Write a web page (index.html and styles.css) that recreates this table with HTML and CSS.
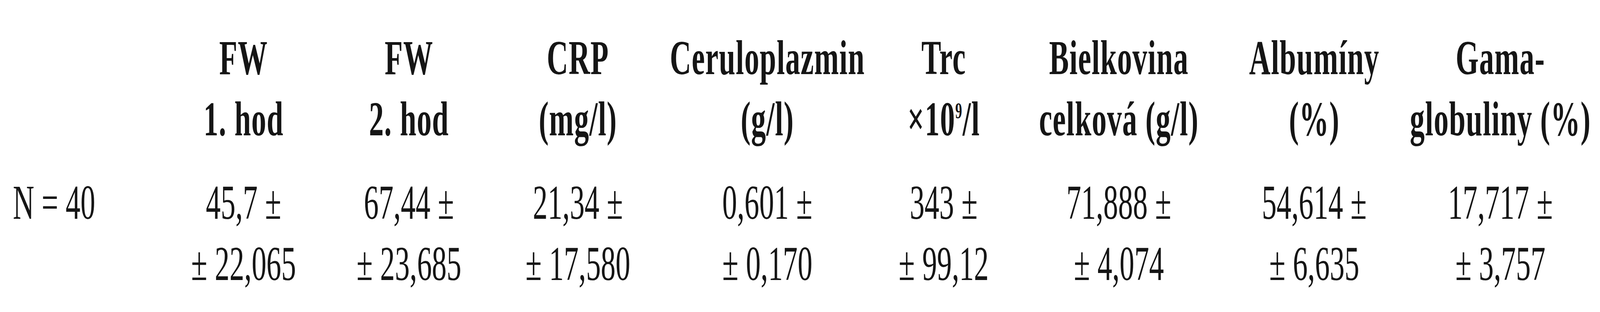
FILE: index.html
```html
<!DOCTYPE html>
<html lang="sk">
<head>
<meta charset="utf-8">
<title>Tabuľka</title>
<link rel="stylesheet" href="styles.css">
</head>
<body>
<div class="frame">
  <div class="table">
    <div class="hdr empty"></div>
    <div class="hdr">FW<br>1. hod</div>
    <div class="hdr">FW<br>2. hod</div>
    <div class="hdr">CRP<br>(mg/l)</div>
    <div class="hdr">Ceruloplazmin<br>(g/l)</div>
    <div class="hdr">Trc<br>×10<span class="sup">9</span>/l</div>
    <div class="hdr">Bielkovina<br>celková (g/l)</div>
    <div class="hdr">Albumíny<br>(%)</div>
    <div class="hdr">Gama-<br>globuliny (%)</div>

    <div class="label">N = 40</div>
    <div class="cell">45,7 ±<br>± 22,065</div>
    <div class="cell">67,44 ±<br>± 23,685</div>
    <div class="cell">21,34 ±<br>± 17,580</div>
    <div class="cell">0,601 ±<br>± 0,170</div>
    <div class="cell">343 ±<br>± 99,12</div>
    <div class="cell">71,888 ±<br>± 4,074</div>
    <div class="cell">54,614 ±<br>± 6,635</div>
    <div class="cell">17,717 ±<br>± 3,757</div>
  </div>
</div>
<script src="app.js"></script>
</body>
</html>
```
FILE: styles.css
```css
:root {
  --sx: 0.61006;
}
html, body {
  margin: 0;
  padding: 0;
  background: #ffffff;
  overflow: hidden;
}
body {
  font-family: "Liberation Serif", "Times New Roman", serif;
  color: #151515;
  font-size: 124px;
  line-height: 157px;
}
.frame {
  height: 800px;
  transform: scaleX(var(--sx));
  transform-origin: 0 0;
}
.table {
  display: grid;
  grid-template-columns: 621px 694px 694px 724px 866px 614px 856px 784px 778px;
  row-gap: 57px;
  padding: 70px 0 0 54px;
}
.hdr {
  font-weight: bold;
  text-align: center;
  white-space: nowrap;
  letter-spacing: 2px;
}
.label {
  text-align: left;
  white-space: nowrap;
}
.cell {
  text-align: center;
  white-space: nowrap;
}
.sup {
  font-size: 0.46em;
  line-height: 0;
  vertical-align: 0.78em;
}
```
FILE: app.js
```js
(function () {
  var sx = Math.min(1, window.innerWidth / 6714);
  document.documentElement.style.setProperty('--sx', String(sx));
})();
```
